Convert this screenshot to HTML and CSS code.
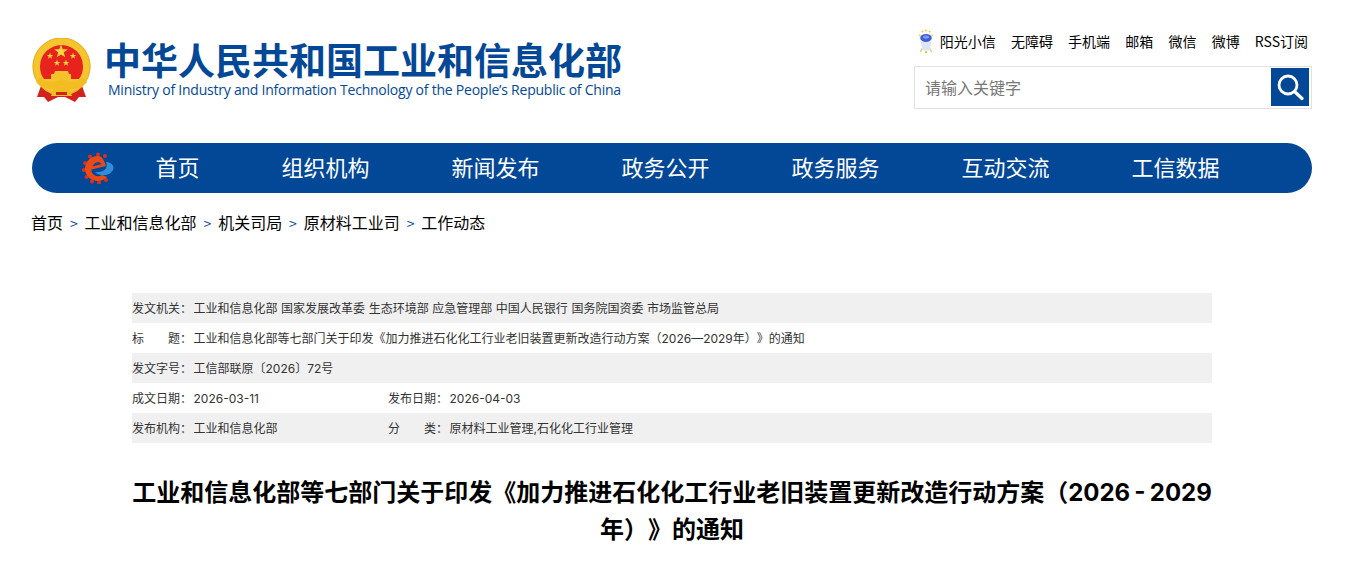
FILE: index.html
```html
<!DOCTYPE html>
<html lang="zh-CN">
<head>
<meta charset="utf-8">
<title>工业和信息化部</title>
<link rel="stylesheet" href="styles.css">
</head>
<body>
<div class="page">
  <header class="top">
    <a class="brand" href="#">
      <svg class="emblem" viewBox="0 0 60 66" aria-hidden="true">
        <defs>
          <polygon id="star" points="0,-10 2.350,-3.240 9.510,-3.090 3.800,1.240 5.880,8.090 0,4 -5.880,8.090 -3.800,1.240 -9.510,-3.090 -2.350,-3.240" fill="#fbd63c"/>
        </defs>
        <path d="M10 45 L5 59 L12 59 L16 64 L26 59 L33 59 L43 64 L47 59 L54 59 L49 45Z" fill="#d3231e"/>
        <circle cx="29.500" cy="28.500" r="29" fill="#f4c52e"/>
        <circle cx="29.500" cy="28.500" r="28.500" fill="none" stroke="#e9ad20" stroke-width="1"/>
        <path d="M29.500 7 A21.500 21.500 0 0 1 51 28.500 C51 33 50 37 47 41 H12 C9 37 8 33 8 28.500 A21.500 21.500 0 0 1 29.500 7Z" fill="#e8231d"/>
        <use href="#star" transform="translate(29 13.500) scale(.72)"/>
        <use href="#star" transform="translate(18 18) scale(.34)"/>
        <use href="#star" transform="translate(41 18) scale(.34)"/>
        <use href="#star" transform="translate(25 25) scale(.34)"/>
        <use href="#star" transform="translate(34 25) scale(.34)"/>
        <path d="M23 33 H36 L37 36 H39 V41 H19 V36 H22Z" fill="#f6c22c"/>
        <path d="M8 39 C15 46 22 44 29.500 41 C37 44 44 46 51 39 L55 44 C47 54 37 51 29.500 48 C22 51 12 54 4 44Z" fill="#f3bc23"/>
        <path d="M22 50 C25 48 34 48 37 50 L40 58 H19Z" fill="#f3bc23"/>
        <path d="M24 54 H35 V57 H24Z" fill="#d3231e"/>
      </svg>
      <span class="brand-text">
        <span class="brand-cn">中华人民共和国工业和信息化部</span>
        <span class="brand-en">Ministry of Industry and Information Technology of the People’s Republic of China</span>
      </span>
    </a>
    <div class="tools">
      <ul class="links">
        <li class="robot-link">
          <svg class="robot" viewBox="0 0 18 28" aria-hidden="true">
            <circle cx="2" cy="7" r="1" fill="#f5c518"/><circle cx="5" cy="3" r="1" fill="#f5c518"/><circle cx="9" cy="1.500" r="1" fill="#f5c518"/><circle cx="13" cy="3" r="1" fill="#f5c518"/><circle cx="16" cy="7" r="1" fill="#f5c518"/>
            <path d="M3 14 H15 L13 24 H5Z" fill="#dde6f5"/>
            <ellipse cx="9" cy="10" rx="6.500" ry="4.500" fill="#3f5fd0"/>
            <ellipse cx="9" cy="9" rx="3.500" ry="1.800" fill="#7f9af0"/>
            <path d="M4 22 L3 26 M14 22 L15 26" stroke="#f1c75c" stroke-width="1.500"/>
            <circle cx="9" cy="26" r="1.300" fill="#f5c518"/>
          </svg>
          <a href="#">阳光小信</a>
        </li>
        <li><a href="#">无障碍</a></li>
        <li><a href="#">手机端</a></li>
        <li><a href="#">邮箱</a></li>
        <li><a href="#">微信</a></li>
        <li><a href="#">微博</a></li>
        <li><a href="#">RSS订阅</a></li>
      </ul>
      <form class="search">
        <input class="search-input" type="text" placeholder="请输入关键字">
        <button class="search-btn" type="button" aria-label="搜索">
          <svg viewBox="0 0 28 28" width="28" height="28" aria-hidden="true">
            <circle cx="12" cy="12" r="9" fill="none" stroke="#fff" stroke-width="2.800"/>
            <path d="M18.500 18.500 L26 25.500" stroke="#fff" stroke-width="3.200" stroke-linecap="round"/>
          </svg>
        </button>
      </form>
    </div>
  </header>

  <nav class="nav">
    <svg class="nav-logo" viewBox="0 0 32 32" aria-hidden="true">
      <g fill="#d9301f">
        <circle cx="16" cy="2.500" r="2"/><circle cx="8" cy="4.500" r="2"/><circle cx="23" cy="4" r="2"/><circle cx="3" cy="11" r="2"/><circle cx="1.800" cy="18" r="2"/><circle cx="4.500" cy="25" r="2"/><circle cx="10" cy="29.500" r="2"/><circle cx="17" cy="30.500" r="2"/><circle cx="24" cy="28" r="2"/>
      </g>
      <path d="M16 4 C8 4 3 10 3 17 C3 24 9 29 16 29 C20 29 23 27 25 25 L20 23 C15 26 9 23 9.500 17.500 L24 14 C22 8 20 4 16 4Z" fill="#ea4a16"/>
      <path d="M10.500 14.500 C12 10 17 9 20 12Z" fill="#0a4a9a"/>
      <path d="M13 20 C20 21 27 17 24 10 C29 10 33 14 31 18 C28 24 18 25 13 20Z" fill="#2f8fd8"/>
    </svg>
    <ul class="nav-list">
      <li><a href="#">首页</a></li>
      <li><a href="#">组织机构</a></li>
      <li><a href="#">新闻发布</a></li>
      <li><a href="#">政务公开</a></li>
      <li><a href="#">政务服务</a></li>
      <li><a href="#">互动交流</a></li>
      <li><a href="#">工信数据</a></li>
    </ul>
  </nav>

  <ol class="crumbs">
    <li><a href="#">首页</a></li>
    <li><a href="#">工业和信息化部</a></li>
    <li><a href="#">机关司局</a></li>
    <li><a href="#">原材料工业司</a></li>
    <li><a href="#">工作动态</a></li>
  </ol>

  <main class="article">
    <div class="meta">
      <div class="meta-row">
        <div class="meta-cell"><span class="meta-label">发文机关：</span><span>工业和信息化部 国家发展改革委 生态环境部 应急管理部 中国人民银行 国务院国资委 市场监管总局</span></div>
      </div>
      <div class="meta-row">
        <div class="meta-cell"><span class="meta-label"><span class="spread"><span>标</span><span>题</span></span>：</span><span>工业和信息化部等七部门关于印发《加力推进石化化工行业老旧装置更新改造行动方案（2026—2029年）》的通知</span></div>
      </div>
      <div class="meta-row">
        <div class="meta-cell"><span class="meta-label">发文字号：</span><span>工信部联原〔2026〕72号</span></div>
      </div>
      <div class="meta-row">
        <div class="meta-cell meta-half"><span class="meta-label">成文日期：</span><span>2026-03-11</span></div>
        <div class="meta-cell"><span class="meta-label">发布日期：</span><span>2026-04-03</span></div>
      </div>
      <div class="meta-row">
        <div class="meta-cell meta-half"><span class="meta-label">发布机构：</span><span>工业和信息化部</span></div>
        <div class="meta-cell"><span class="meta-label"><span class="spread"><span>分</span><span>类</span></span>：</span><span>原材料工业管理,石化化工行业管理</span></div>
      </div>
    </div>
    <h1 class="title">工业和信息化部等七部门关于印发《加力推进石化化工行业老旧装置更新改造行动方案（2026 - 2029年）》的通知</h1>
  </main>
</div>
</body>
</html>
```
FILE: styles.css
```css
* { box-sizing: border-box; }
html, body { margin: 0; padding: 0; background: #fff; }
body {
  font-family: "Noto Sans CJK SC", "Open Sans", "Liberation Sans", sans-serif;
  color: #000;
}
a { color: inherit; text-decoration: none; }
ul, ol { list-style: none; margin: 0; padding: 0; }

.page { padding: 0 37px 0 32px; }

.top {
  display: flex;
  justify-content: space-between;
  height: 143px;
}
.brand { display: flex; align-items: flex-start; padding-top: 37px; }
.emblem { width: 60px; height: 66px; flex: none; margin-top: 1px; }
.brand-text { display: flex; flex-direction: column; margin-left: 12px; }
.brand-cn {
  font-size: 37px;
  font-weight: 700;
  line-height: 44px;
  color: #034896;
  white-space: nowrap;
}
.brand-en {
  font-family: "Open Sans", "Liberation Sans", sans-serif;
  font-size: 14px;
  line-height: 16px;
  margin: 1px 0 0 4px;
  color: #034896;
  white-space: nowrap;
  letter-spacing: -0.23px;
}

.tools { width: 398px; padding-top: 27px; }
.links {
  display: flex;
  justify-content: flex-end;
  align-items: center;
  gap: 15.200px;
  height: 28px;
  padding-right: 4px;
  font-size: 14px;
  line-height: 28px;
  white-space: nowrap;
}
.robot-link { display: flex; align-items: center; gap: 6px; }
.robot { width: 16px; height: 27px; flex: none; }
.search {
  display: flex;
  justify-content: space-between;
  align-items: flex-start;
  height: 43px;
  margin-top: 11px;
  padding: 1px 2px 0 0;
  border: 1px solid #e1e1e1;
}
.search-input {
  flex: 1;
  min-width: 0;
  height: 38px;
  padding: 0 10px 0 10px;
  border: 0;
  outline: 0;
  font: 16px "Noto Sans CJK SC", sans-serif;
  background: transparent;
}
.search-input::placeholder { color: #777; opacity: 1; }
.search-btn {
  display: flex;
  align-items: center;
  justify-content: center;
  width: 38px;
  height: 38px;
  flex: none;
  padding: 0;
  border: 0;
  background: #034896;
}

.nav {
  display: flex;
  align-items: center;
  height: 50px;
  padding-left: 50px;
  border-radius: 25px;
  background: #034896;
}
.nav-logo { width: 32px; height: 32px; flex: none; }
.nav-list {
  display: flex;
  gap: 82px;
  margin-left: 41.500px;
  padding-bottom: 3px;
  font-size: 22px;
  line-height: 47px;
  color: #fff;
  white-space: nowrap;
}

.crumbs {
  display: flex;
  align-items: center;
  height: 58px;
  margin-left: -1px;
  font-size: 16px;
  white-space: nowrap;
}
.crumbs li + li::before {
  content: ">";
  margin: 0 6.900px;
  font-size: 14px;
  color: #034896;
}

.article { width: 1080px; margin: 42px 0 0 100px; text-spacing-trim: space-all; }
.meta { font-family: Inter, "Noto Sans CJK SC", sans-serif; font-size: 12px; color: #333; word-spacing: 0.2px; }
.meta-row { display: flex; height: 30px; align-items: center; padding-bottom: 2px; }
.meta-row:nth-child(odd) { background: #f0f0f0; }
.meta-cell { display: flex; align-items: baseline; white-space: nowrap; }
.meta-half { width: 256px; }
.meta-label { display: flex; width: 61.500px; flex: none; }
.spread { display: flex; justify-content: space-between; width: 48px; }

.title {
  margin: 31px -6px 0;
  font-family: Inter, "Noto Sans CJK SC", sans-serif;
  font-size: 24px;
  font-weight: 700;
  line-height: 37px;
  word-spacing: -1.500px;
  text-align: center;
}
```
